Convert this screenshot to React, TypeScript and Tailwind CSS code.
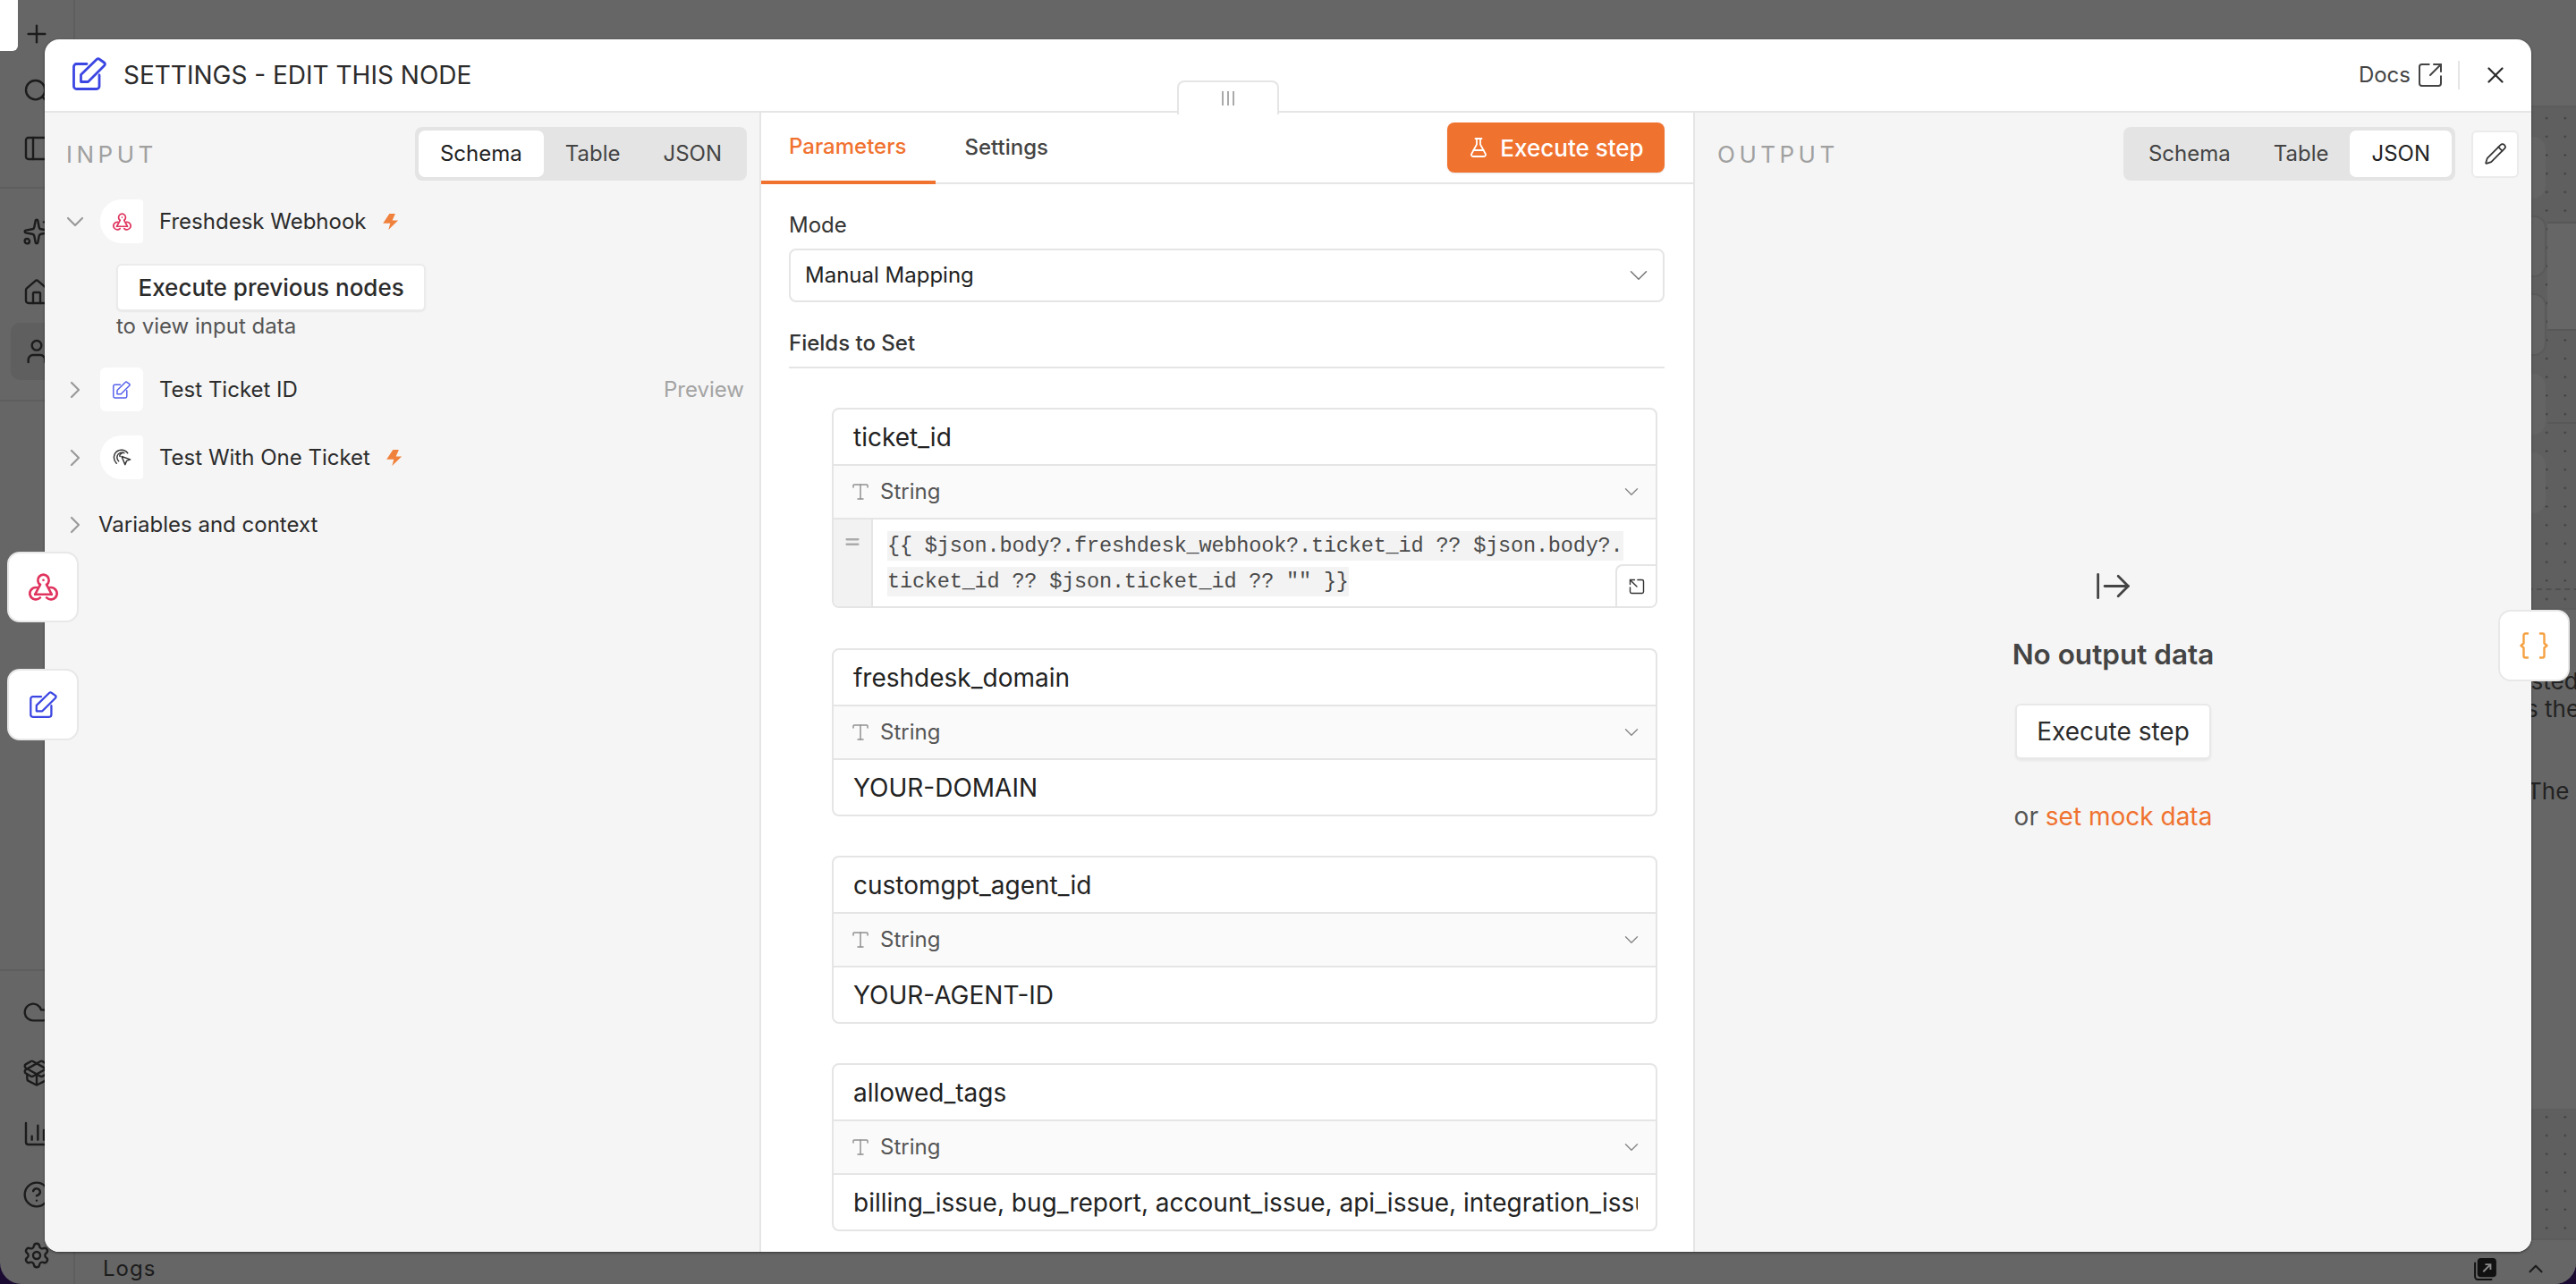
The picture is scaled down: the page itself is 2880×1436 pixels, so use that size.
import {
  ArrowRightFromLine,
  ChartColumn,
  ChevronDown,
  ChevronRight,
  ChevronUp,
  CircleHelp,
  Cloud,
  Equal,
  FlaskConical,
  House,
  PackageOpen,
  PanelLeft,
  Pencil,
  Plus,
  Search,
  Settings,
  Sparkles,
  SquareArrowOutUpRight,
  Type,
  User,
  X,
} from 'lucide-react';

function Bolt() {
  return (
    <svg viewBox="0 0 18 18.4" className="w-[18px] h-[18px] text-[#f0813c]" fill="currentColor">
      <path d="M7.3 0 H14 L10.7 7.7 H17.3 L6.3 18.3 L8.3 11 H0 Z" />
    </svg>
  );
}

function EditIcon({ className }: { className: string }) {
  return (
    <svg viewBox="0 0 38 37" className={className} fill="none" stroke="currentColor" strokeWidth="2.8" strokeLinejoin="round" strokeLinecap="round">
      <path d="M16 7.5 H4.5 a3 3 0 0 0 -3 3 V32.5 a3 3 0 0 0 3 3 H27 a3 3 0 0 0 3 -3 V20" />
      <path d="M9.5 27.5 V19.5 L27 2.5 a2.5 2.5 0 0 1 3.5 0 L35.5 6 a2.5 2.5 0 0 1 0 3.5 L17.5 27.5 Z" />
    </svg>
  );
}

function WebhookIcon({ className }: { className: string }) {
  return (
    <svg viewBox="0 0 32 30" className={className} fill="none" stroke="currentColor" strokeWidth="2.6" strokeLinecap="round">
      <path d="M12.5 12.5 A6 6 0 1 1 19.5 12.5" />
      <path d="M12.5 12.5 L7 23" />
      <path d="M19.5 12.5 L25 23" />
      <path d="M7 23 H25" />
      <path d="M8.5 15.5 A6.5 6.5 0 1 0 12.5 26.5" />
      <path d="M23.5 15.5 A6.5 6.5 0 1 1 19.5 26.5" />
      <circle cx="16" cy="7.5" r="1.3" fill="currentColor" stroke="none" />
    </svg>
  );
}

function BracesIcon() {
  return (
    <svg viewBox="0 0 32 30" className="w-[32px] h-[30px] text-[#f5a142]" fill="none" stroke="currentColor" strokeWidth="2.4" strokeLinejoin="round" strokeLinecap="round">
      <path d="M9 1.5 H6.5 a2 2 0 0 0 -2 2 V12.5 L1.5 15 L4.5 17.5 V26.5 a2 2 0 0 0 2 2 H9" />
      <path d="M23 1.5 H25.5 a2 2 0 0 1 2 2 V12.5 L30.5 15 L27.5 17.5 V26.5 a2 2 0 0 1 -2 2 H23" />
    </svg>
  );
}

function ClickIcon() {
  return (
    <svg viewBox="0 0 24 24" className="w-[23px] h-[23px] text-[#333]" fill="none" stroke="currentColor" strokeWidth="1.5" strokeLinecap="round">
      <path d="M18.5 7A9 9 0 0 0 3.5 8a10 10 0 0 0 2 11" />
      <path d="M14.5 7A5.5 5.5 0 0 0 6.5 10a6.5 6.5 0 0 0 1.5 6.5" />
      <path d="M11.5 7.5a2.5 2.5 0 0 0-2 3.5" />
      <path d="M11.5 11l10 3.5-4.2 1.6-1.8 4.4z" fill="#fff" strokeLinejoin="round" />
    </svg>
  );
}

function ViewSwitch({ active }: { active: string }) {
  return (
    <div className="flex items-center h-[60px] rounded-[8px] bg-[#e4e4e4] p-[4px] text-[24px] text-[#444]">
      {['Schema', 'Table', 'JSON'].map((tab) =>
        tab === active ? (
          <div key={tab} className="h-[52px] px-[24px] flex items-center rounded-[7px] bg-white text-[#222]">
            {tab}
          </div>
        ) : (
          <div key={tab} className="h-[52px] px-[24px] flex items-center">
            {tab}
          </div>
        ),
      )}
    </div>
  );
}

function NodeRow({
  name,
  icon,
  open,
  trigger,
  preview,
}: {
  name: string;
  icon: React.ReactNode;
  open?: boolean;
  trigger?: boolean;
  preview?: boolean;
}) {
  return (
    <div className="flex items-center h-[49px]">
      <div className="w-5 flex justify-center text-[#999]">
        {open ? (
          <ChevronDown size={32} strokeWidth={1.6} className="shrink-0" />
        ) : (
          <ChevronRight size={32} strokeWidth={1.6} className="shrink-0" />
        )}
      </div>
      <div
        className={
          trigger
            ? 'ml-[18px] w-[48px] h-[49px] flex items-center justify-center bg-white rounded-l-[24px] rounded-r-[4px]'
            : 'ml-[18px] w-[48px] h-[49px] flex items-center justify-center bg-white rounded-[6px]'
        }
      >
        {icon}
      </div>
      <span className="ml-[18px] text-[24px] text-[#2b2b2b]">{name}</span>
      {trigger && (
        <span className="ml-[18px]">
          <Bolt />
        </span>
      )}
      {preview && <span className="ml-auto mr-[3px] text-[24px] text-[#a3a3a3]">Preview</span>}
    </div>
  );
}

function FieldCard({ name, value, code }: { name: string; value?: string; code?: string[] }) {
  return (
    <div
      className={
        code
          ? 'relative ml-[48px] mr-[8px] mb-[45px] border-2 border-[#e5e5e5] rounded-[8px] bg-white overflow-hidden'
          : 'relative ml-[48px] mr-[8px] mb-[44px] border-2 border-[#e5e5e5] rounded-[8px] bg-white overflow-hidden'
      }
    >
      <div className="h-[61px] px-[22px] flex items-center text-[28px] text-[#222]">{name}</div>
      <div className="h-[62px] pl-[18px] pr-[14px] flex items-center bg-[#fafafa] border-y-2 border-[#e5e5e5] text-[#555]">
        <Type size={24} strokeWidth={1.5} className="text-[#909090]" />
        <span className="ml-[10px] text-[24px]">String</span>
        <ChevronDown size={26} strokeWidth={1.3} className="ml-auto text-[#888]" />
      </div>
      {code ? (
        <div className="flex h-[97px]">
          <div className="w-[44px] bg-[#f2f2f2] border-r-2 border-[#e5e5e5] pt-[14px] flex justify-center text-[#aaa]">
            <Equal size={22} strokeWidth={2.5} />
          </div>
          <div className="pl-[16px] pt-[10px] font-['Liberation_Mono',monospace] text-[23.55px] tracking-[-0.19px] leading-[40px] text-[#4a4a4a] whitespace-pre">
            {code.map((line) => (
              <div key={line}>
                <span className="bg-[#f3f3f3] py-[3px]">{line}</span>
              </div>
            ))}
          </div>
          <div className="absolute right-0 bottom-0 w-[45px] h-[47px] bg-white border-l-2 border-t-2 border-[#e5e5e5] rounded-tl-[8px] flex items-center justify-center text-[#333]">
            <SquareArrowOutUpRight size={20} strokeWidth={1.7} className="-scale-x-100" />
          </div>
        </div>
      ) : (
        <div className="h-[61px] pl-[22px] pr-[20px] flex items-center text-[28px] text-[#222] whitespace-nowrap">
          <div className="overflow-hidden">{value}</div>
        </div>
      )}
    </div>
  );
}

function SideIcon({ children, active, tall }: { children: React.ReactNode; active?: boolean; tall?: boolean }) {
  if (active) {
    return <div className="h-[64px] w-[60px] ml-[12px] flex items-center pl-[13px] rounded-[10px] bg-[#5f5f5f]">{children}</div>;
  }
  return <div className={tall ? 'h-[68px] flex items-center pl-[25px]' : 'h-[64px] flex items-center pl-[25px]'}>{children}</div>;
}

export default function App() {
  return (
    <div className="relative w-full h-screen overflow-hidden bg-[#1b0b33] font-['Inter',sans-serif]">
      {/* app behind the dimmed modal */}
      <div className="flex h-full rounded-b-[24px] bg-[#666666] text-[#1c1c1c] overflow-hidden">
        <aside className="w-[84px] shrink-0 border-r-2 border-[#5e5e5e] flex flex-col">
          <div className="relative h-[211px] border-b-2 border-[#5e5e5e]">
            <div className="absolute left-0 top-0 w-[20px] h-[57px] bg-white rounded-br-[6px]" />
            <div className="pt-[6px]">
              <SideIcon><Plus size={32} strokeWidth={1.8} /></SideIcon>
              <SideIcon><Search size={32} strokeWidth={1.8} /></SideIcon>
              <SideIcon><PanelLeft size={32} strokeWidth={1.8} /></SideIcon>
            </div>
          </div>
          <div className="h-[238px] border-b-2 border-[#5e5e5e] pt-[14px]">
            <SideIcon tall><Sparkles size={32} strokeWidth={1.8} /></SideIcon>
            <SideIcon tall><House size={32} strokeWidth={1.8} /></SideIcon>
            <SideIcon active><User size={32} strokeWidth={1.8} /></SideIcon>
          </div>
          <div className="flex-1" />
          <div className="h-[352px] border-t-2 border-[#5e5e5e] pt-[12px]">
            <SideIcon tall><Cloud size={32} strokeWidth={1.8} /></SideIcon>
            <SideIcon tall><PackageOpen size={32} strokeWidth={1.8} /></SideIcon>
            <SideIcon tall><ChartColumn size={32} strokeWidth={1.8} /></SideIcon>
            <SideIcon tall><CircleHelp size={32} strokeWidth={1.8} /></SideIcon>
            <SideIcon tall><Settings size={32} strokeWidth={1.8} /></SideIcon>
          </div>
        </aside>
        <main className="flex-1 flex flex-col">
          <div className="h-[120px] border-b-2 border-[#5c5c5c]" />
          <div className="relative flex-1 bg-[#5f5f5f] bg-[radial-gradient(#3f3f3f_1px,transparent_1.2px)] bg-[size:20.7px_20.7px] bg-[position:1.4px_1.8px]">
            <div className="absolute left-[2660px] top-[33px] w-[102px] h-[69px] rounded-[14px] bg-[#646464]" />
            <div className="absolute left-[2660px] top-[121px] w-[103px] h-[69px] rounded-[14px] bg-[#636363] border-2 border-[#5a5a5a]" />
            <div className="absolute left-[2660px] top-[208px] w-[103px] h-[70px] rounded-[14px] bg-[#646464] border-2 border-[#5a5a5a]" />
            <div className="absolute left-[2660px] top-[298px] w-[102px] h-[68px] rounded-[14px] bg-[#646464]" />
            <div className="absolute left-[2660px] top-[386px] w-[102px] h-[68px] rounded-[14px] bg-[#646464]" />
            <div className="absolute left-[2764px] top-[128px] w-[40px] h-[122px] bg-[#666666] border-y-2 border-[#585858]" />
            <div className="absolute left-[2764px] top-[352px] w-[40px] border-t-2 border-[#585858]" />
            <div className="absolute left-[2700px] top-[538px] w-[110px] border-t-2 border-dashed border-[#4e4e4e]" />
            <div className="absolute left-[2700px] top-[560px] w-[110px] h-[560px] bg-[#666666] border-t-2 border-[#5c5c5c] text-[26px] text-[#222] whitespace-nowrap">
              <div className="absolute left-[33px] top-[60px]">listed</div>
              <div className="absolute left-[40px] top-[91px]">s the</div>
              <div className="absolute left-[41px] top-[183px]">The a</div>
            </div>
          </div>
          <div className="h-[51px] relative bg-[#666666] border-t-2 border-[#5c5c5c] flex items-center text-[24px] tracking-[1px] pl-[31px] pt-[14px]">
            Logs
            <div className="ml-auto mr-[32px] flex items-center gap-[30px]">
              <svg viewBox="0 0 24 24" className="w-[26px] h-[26px]" fill="none">
                <rect x="3.5" y="1" width="19.5" height="19.5" rx="3.5" fill="#111" />
                <path d="M1 6v14a3 3 0 0 0 3 3h14" stroke="#111" strokeWidth="1.8" strokeLinecap="round" />
                <path d="M9.5 15 L17 7.5 M11.5 7.5 H17 V13" stroke="#8a8a8a" strokeWidth="1.8" />
              </svg>
              <ChevronUp size={26} strokeWidth={2} />
            </div>
          </div>
        </main>
      </div>

      {/* modal */}
      <div className="absolute left-[50px] top-[44px] w-[2780px] h-[1356px] rounded-[16px] overflow-hidden bg-white flex flex-col shadow-[0_1px_3px_rgba(0,0,0,0.5)]">
        <header className="h-[82px] shrink-0 border-b-2 border-[#e5e5e5] flex items-center pl-[31px] text-[#2b2b2b]">
          <EditIcon className="w-[38px] h-[37px] -mt-[3px] text-[#3b46e2]" />
          <span className="ml-[19px] text-[28px] font-normal">SETTINGS - EDIT THIS NODE</span>
          <div className="ml-auto flex items-center">
            <span className="text-[24px] text-[#444]">Docs</span>
            <SquareArrowOutUpRight size={32} strokeWidth={1.5} className="ml-[6px] text-[#444]" />
            <div className="ml-[15px] w-[2px] h-[32px] bg-[#e5e5e5]" />
            <div className="w-[80px] flex justify-center">
              <X size={30} strokeWidth={1.8} />
            </div>
          </div>
        </header>

        <div className="flex-1 flex min-h-0">
          {/* input panel */}
          <section className="w-[799px] shrink-0 bg-[#f5f5f5] pt-[16px] pl-[24px] pr-[14px]">
            <div className="flex items-center justify-between">
              <span className="text-[26px] tracking-[4.5px] text-[#a0a0a0]">INPUT</span>
              <ViewSwitch active="Schema" />
            </div>
            <div className="mt-[21px]">
              <NodeRow open trigger name="Freshdesk Webhook" icon={<WebhookIcon className="w-[21px] h-[20px] text-[#e0345e]" />} />
            </div>
            <div className="ml-[56px] mt-[23px]">
              <div className="inline-flex items-center h-[53px] px-[22.5px] bg-white border-2 border-[#ebebeb] rounded-[6px] text-[26px] font-medium text-[#2b2b2b] shadow-[0_1px_2px_rgba(0,0,0,0.06)]">
                Execute previous nodes
              </div>
              <div className="mt-[1px] text-[24px] leading-[32px] text-[#555]">to view input data</div>
            </div>
            <div className="mt-[30px]">
              <NodeRow preview name="Test Ticket ID" icon={<EditIcon className="w-[20px] h-[20px] text-[#5560ea]" />} />
            </div>
            <div className="mt-[27px]">
              <NodeRow trigger name="Test With One Ticket" icon={<ClickIcon />} />
            </div>
            <div className="mt-[35px] flex items-center h-[32px]">
              <div className="w-5 flex justify-center text-[#999]">
                <ChevronRight size={32} strokeWidth={1.6} className="shrink-0" />
              </div>
              <span className="ml-[16px] text-[24px] text-[#2b2b2b]">Variables and context</span>
            </div>
          </section>

          {/* parameters panel */}
          <section className="relative w-[1046px] shrink-0 border-x-2 border-[#e5e5e5] bg-white">
            <div className="absolute left-[465px] -top-[36px] w-[114px] h-[38px] bg-white border-x-2 border-t-2 border-[#e5e5e5] rounded-t-[8px] flex items-center justify-center gap-[4px]">
              <span className="w-[2px] h-[16px] bg-[#aaa]" />
              <span className="w-[2px] h-[16px] bg-[#aaa]" />
              <span className="w-[2px] h-[16px] bg-[#aaa]" />
            </div>
            <div className="h-[80px] border-b-2 border-[#e5e5e5] flex text-[24px] font-medium">
              <div className="h-[80px] pl-[31px] pr-[33px] flex items-center border-b-4 border-[#f0722f] text-[#f0722f]">Parameters</div>
              <div className="h-[78px] px-[32px] flex items-center text-[#444]">Settings</div>
              <div className="ml-auto mr-[32px] mt-[11px] h-[56px] w-[243px] rounded-[8px] bg-[#f0722f] text-white flex items-center justify-center gap-[12px] text-[26px] font-medium shadow-[0_1px_2px_rgba(0,0,0,0.1)]">
                <FlaskConical size={24} strokeWidth={1.8} />
                Execute step
              </div>
            </div>
            <div className="pl-[31px] pr-[32px] pt-[30px]">
              <div className="text-[24px] leading-[32px] text-[#333]">Mode</div>
              <div className="mt-[10px] h-[60px] border-2 border-[#e5e5e5] rounded-[8px] pl-[16px] flex items-center text-[24px] text-[#222]">
                Manual Mapping
                <ChevronDown size={34} strokeWidth={1.1} className="ml-auto mr-[10px] text-[#777]" />
              </div>
              <div className="mt-[28px] h-[46px] text-[24px] font-medium text-[#333] border-b-2 border-[#e5e5e5]">Fields to Set</div>
              <div className="mt-[44px]">
                <FieldCard
                  name="ticket_id"
                  code={['{{ $json.body?.freshdesk_webhook?.ticket_id ?? $json.body?.', 'ticket_id ?? $json.ticket_id ?? "" }}']}
                />
                <FieldCard name="freshdesk_domain" value="YOUR-DOMAIN" />
                <FieldCard name="customgpt_agent_id" value="YOUR-AGENT-ID" />
                <FieldCard name="allowed_tags" value="billing_issue, bug_report, account_issue, api_issue, integration_issue, feature_request" />
              </div>
            </div>
          </section>

          {/* output panel */}
          <section className="relative flex-1 bg-[#f5f5f5] pt-[16px] pl-[25px] pr-[14px] flex flex-col">
            <div className="flex items-center">
              <span className="text-[26px] tracking-[4.5px] text-[#a0a0a0]">OUTPUT</span>
              <div className="ml-auto">
                <ViewSwitch active="JSON" />
              </div>
              <div className="ml-[18px] w-[53px] h-[53px] rounded-[6px] bg-white border-2 border-[#ebebeb] flex items-center justify-center text-[#333]">
                <Pencil size={26} strokeWidth={1.6} />
              </div>
            </div>
            <div className="absolute left-0 right-0 top-[507px] flex flex-col items-center">
              <ArrowRightFromLine size={45} strokeWidth={1.5} className="text-[#444]" />
              <div className="mt-[30px] text-[31.5px] font-semibold text-[#444]">No output data</div>
              <div className="mt-[32px] h-[62px] w-[219px] flex items-center justify-center bg-white border-2 border-[#e8e8e8] rounded-[6px] text-[28px] text-[#2b2b2b] shadow-[0_2px_3px_rgba(0,0,0,0.06)]">
                Execute step
              </div>
              <div className="mt-[43px] text-[28px] text-[#555]">
                or <span className="text-[#f0722f]">set mock data</span>
              </div>
            </div>
          </section>
        </div>
      </div>

      {/* floating node tabs */}
      <div className="absolute left-[8px] top-[617px] w-[80px] h-[79px] rounded-[14px] bg-white border-2 border-[#e8e8e8] flex items-center justify-center">
        <WebhookIcon className="w-[33px] h-[31px] text-[#e0345e]" />
      </div>
      <div className="absolute left-[8px] top-[748px] w-[80px] h-[80px] rounded-[14px] bg-white border-2 border-[#e8e8e8] flex items-center justify-center">
        <EditIcon className="w-[31px] h-[30px] text-[#3b46e2]" />
      </div>
      <div className="absolute left-[2793px] top-[682px] w-[80px] h-[80px] rounded-[14px] bg-white border-2 border-[#e8e8e8] flex items-center justify-center">
        <BracesIcon />
      </div>
    </div>
  );
}
